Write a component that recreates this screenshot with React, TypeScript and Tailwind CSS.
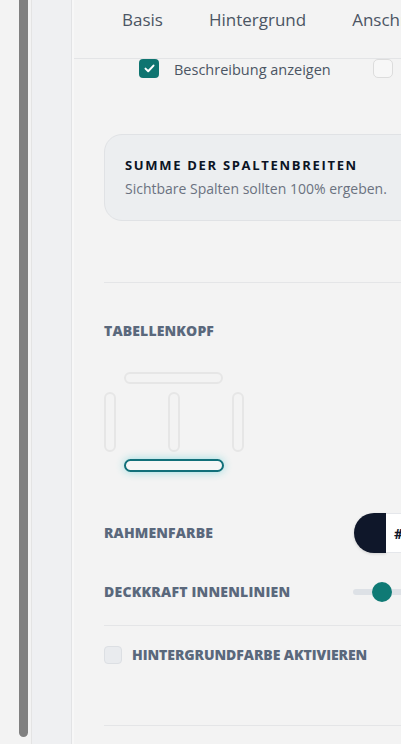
import React from 'react';

const font = { fontFamily: '"Open Sans", "Noto Sans", Arial, sans-serif' };

function Bar({ className }: { className: string }) {
  return <div className={`rounded-full border-2 ${className}`} />;
}

export default function App() {
  return (
    <div className="flex h-[744px] w-[401px] overflow-hidden bg-[#f3f3f3]" style={font}>
      {/* left rail with scrollbar */}
      <div className="w-[19px] shrink-0 bg-[#f3f3f3]" />
      <div className="h-[737px] w-[9px] shrink-0 rounded-b-full bg-[#808080]" />
      <div className="w-[3px] shrink-0 bg-[#f3f3f3]" />
      <div className="w-[41px] shrink-0 border-l border-r border-l-[#e4e4e4] border-r-[#e2e3e5] bg-[#eff0f2]" />
      <div className="w-[2px] shrink-0 bg-[#f7f7f7]" />

      {/* main panel */}
      <div className="min-w-0 flex-1 overflow-hidden">
        <div className="w-[520px]">
          {/* tabs */}
          <div className="flex h-[59px] items-start gap-[46px] border-b border-[#e3e4e6] pl-[48px] pt-[8px] text-[17px] leading-[24px] text-[#4b5563]">
            <span>Basis</span>
            <span>Hintergrund</span>
            <span>Anschrift</span>
          </div>

          {/* checkbox row */}
          <div className="flex h-[21px] items-start text-[14.5px] text-[#4b5563]">
            <div className="ml-[65px] flex h-[19px] w-[20px] items-center justify-center rounded-[4px] bg-[#0f7470]">
              <svg width="11" height="9" viewBox="0 0 11 9" fill="none">
                <path d="M1.5 4.6 4.2 7.2 9.5 1.6" stroke="white" strokeWidth="2" strokeLinecap="round" strokeLinejoin="round" />
              </svg>
            </div>
            <span className="ml-[15px] mt-[1px] leading-[20px]">Beschreibung anzeigen</span>
            <div className="ml-[42px] h-[19px] w-[20px] rounded-[5px] border border-[#dcdcdc] bg-[#f7f7f7]" />
            <span className="ml-[12px] mt-[1px] leading-[20px]">Titel</span>
          </div>

          <div className="pl-[30px]">
            {/* info box */}
            <div className="mt-[54px] h-[87px] rounded-l-[18px] border border-[#e0e2e5] bg-[#eceef0] pl-[20px] pt-[21px]">
              <div className="text-[13px] font-bold leading-[18px] tracking-[0.13em] text-[#0b1324]">SUMME DER SPALTENBREITEN</div>
              <div className="mt-[5px] text-[14px] leading-[20px] text-[#6b7280]">Sichtbare Spalten sollten 100% ergeben.</div>
            </div>

            <div className="mt-[61px] h-px bg-[#e4e5e7]" />

            <div className="mt-[39px] text-[14px] font-extrabold leading-[18px] tracking-[0.01em] text-[#5a687c]">TABELLENKOPF</div>

            {/* header layout diagram */}
            <div className="mt-[32px] flex w-[140px] flex-col">
              <Bar className="ml-[20px] h-[12px] w-[99px] border-[#e6e6e6]" />
              <div className="mt-[8px] flex justify-between">
                <Bar className="h-[60px] w-[12px] border-[#e6e6e6]" />
                <Bar className="h-[60px] w-[12px] border-[#e6e6e6]" />
                <Bar className="h-[60px] w-[12px] border-[#e6e6e6]" />
              </div>
              <Bar className="ml-[20px] mt-[7px] h-[13px] w-[100px] border-[#12707a] bg-[#f6f6f6] shadow-[0_0_8px_rgba(34,190,200,0.45)]" />
            </div>

            {/* Rahmenfarbe */}
            <div className="mt-[41px] grid grid-cols-[250px_1fr] items-center">
              <span className="text-[14px] font-extrabold leading-[18px] tracking-[0.01em] text-[#5a687c]">RAHMENFARBE</span>
              <div className="flex h-[40px]">
                <div className="w-[32px] rounded-l-full bg-[#0f172a] shadow-[0_1px_3px_rgba(0,0,0,0.15)]" />
                <div className="flex w-[120px] items-center border-y border-[#e5e7eb] bg-white pl-[8px] text-[14px] font-bold text-[#0f172a]">#0f172a</div>
              </div>
            </div>

            {/* Deckkraft */}
            <div className="mt-[29px] grid grid-cols-[249px_1fr] items-center">
              <span className="text-[14px] font-extrabold leading-[18px] tracking-[0.015em] text-[#5a687c]">DECKKRAFT INNENLINIEN</span>
              <div className="relative h-[20px]">
                <div className="absolute left-0 right-0 top-[7px] h-[6px] rounded-full bg-[#dde1e6]" />
                <div className="absolute left-[19px] top-0 h-[20px] w-[20px] rounded-full bg-[#0f7a75]" />
              </div>
            </div>

            <div className="mt-[23px] h-px bg-[#e4e5e7]" />

            {/* Hintergrundfarbe */}
            <div className="mt-[20px] flex items-center">
              <div className="h-[18px] w-[18px] rounded-[4px] border border-[#dcdfe3] bg-[#e9ebee]" />
              <span className="ml-[10px] text-[14px] font-extrabold leading-[18px] tracking-[-0.005em] text-[#5a687c]">HINTERGRUNDFARBE AKTIVIEREN</span>
            </div>

            <div className="mt-[61px] h-px bg-[#e4e5e7]" />
          </div>
        </div>
      </div>
    </div>
  );
}
